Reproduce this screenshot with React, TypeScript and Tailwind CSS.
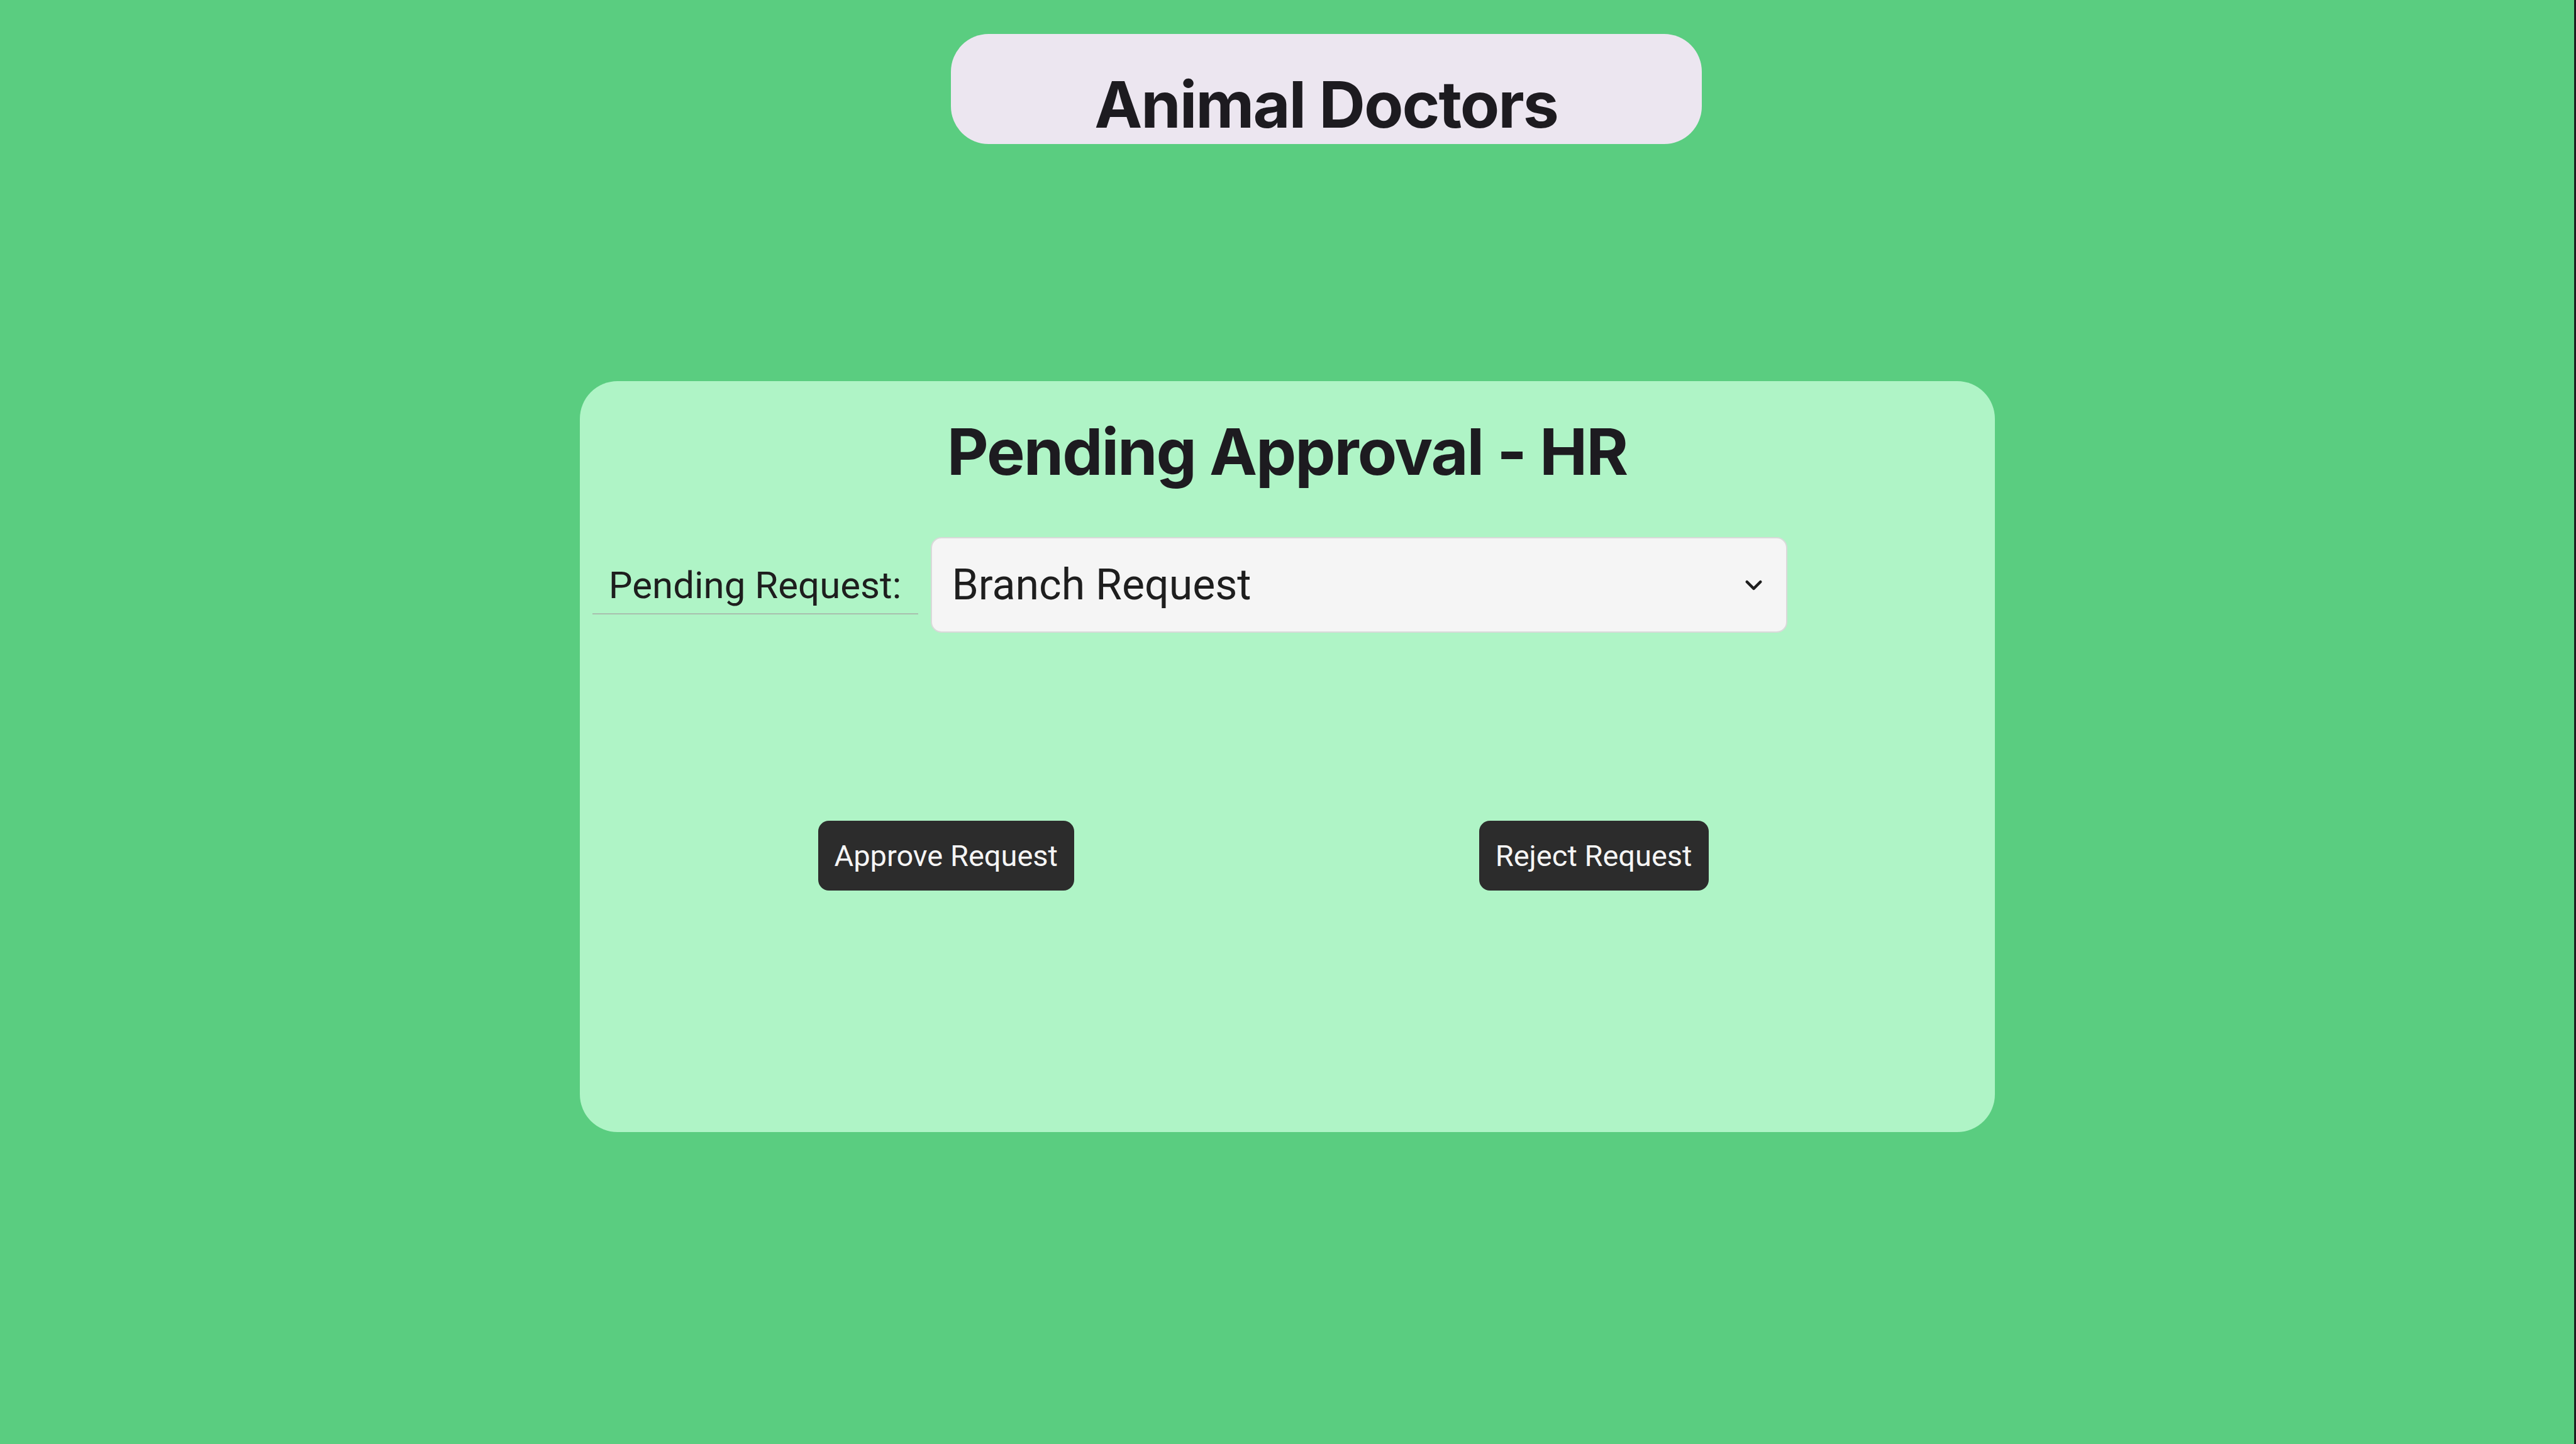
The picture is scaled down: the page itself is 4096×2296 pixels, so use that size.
import { useState } from "react";
import { ChevronDown } from "lucide-react";

const requests = ["Branch Request", "Transfer Request", "Leave Request"];

function Banner() {
  return (
    <header className="flex w-full justify-center pl-[124px]">
      <div className="flex w-full max-w-[1194px] justify-center rounded-[60px] bg-[#ece6f0] pt-[50px] pb-px">
        <h1 className="font-['Inter'] text-[102px] leading-[124px] font-bold tracking-[-0.02em] text-[#1d1b20]">
          Animal Doctors
        </h1>
      </div>
    </header>
  );
}

function RequestPicker() {
  const [request, setRequest] = useState(requests[0]);
  return (
    <div className="flex items-center gap-5 pr-[330px] pl-5">
      <label
        htmlFor="request"
        className="flex h-[94px] w-[518px] shrink-0 items-center justify-center border-b-2 border-[#a8bfae] pt-1 text-[60px] leading-[80px] whitespace-nowrap text-[#1e1e1e]"
      >
        Pending Request:
      </label>
      <div className="grid grow items-center">
        <select
          id="request"
          value={request}
          onChange={(event) => setRequest(event.target.value)}
          className="col-start-1 row-start-1 h-[152px] w-full appearance-none rounded-[17px] border-2 border-[#d9d9d9] bg-[#f5f5f5] pr-24 pl-8 text-[68px] text-[#1e1e1e]"
        >
          {requests.map((name) => (
            <option key={name}>{name}</option>
          ))}
        </select>
        <ChevronDown
          aria-hidden="true"
          size={43}
          strokeWidth={2.4}
          className="pointer-events-none col-start-1 row-start-1 mr-8 justify-self-end text-[#1e1e1e]"
        />
      </div>
    </div>
  );
}

function ActionButton({ children }: { children: string }) {
  return (
    <button
      type="button"
      className="h-[111px] rounded-[17px] bg-[#2c2c2c] px-[26px] text-[47px] leading-[48px] whitespace-nowrap text-[#f5f5f5]"
    >
      {children}
    </button>
  );
}

export default function App() {
  return (
    <div className="flex min-h-screen flex-col items-center border-r-3 border-[#1e1e1e] bg-[#5acd80] pt-[54px] font-['Roboto',sans-serif]">
      <Banner />
      <main className="mt-[377px] w-full max-w-[2250px] rounded-[60px] bg-[#aff4c6] pt-[50px] pb-[384px]">
        <h2 className="text-center font-['Inter'] text-[102px] leading-[124px] font-bold tracking-[-0.02em] text-[#1d1b20]">
          Pending Approval - HR
        </h2>
        <div className="mt-[74px]">
          <RequestPicker />
        </div>
        <div className="mt-[299px] flex justify-between pr-[455px] pl-[379px]">
          <ActionButton>Approve Request</ActionButton>
          <ActionButton>Reject Request</ActionButton>
        </div>
      </main>
    </div>
  );
}
